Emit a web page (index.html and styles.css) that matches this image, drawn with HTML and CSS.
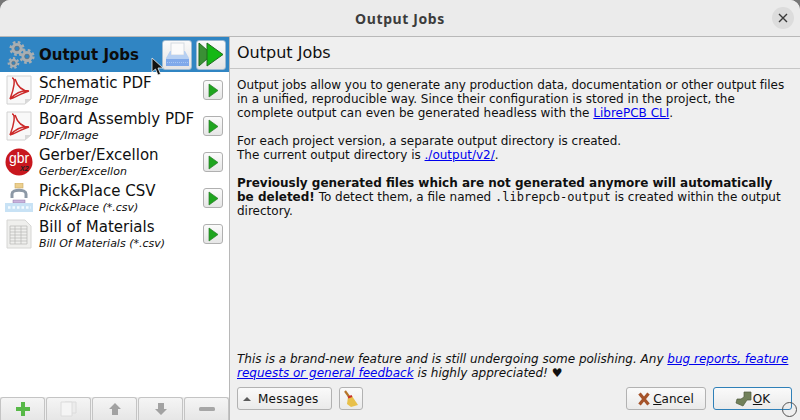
FILE: index.html
```html
<!DOCTYPE html>
<html lang="en">
<head>
    <meta charset="UTF-8">
    <title>Output Jobs</title>
    <link rel="stylesheet" href="styles.css">
</head>
<body>
<div class="window">
    <div class="titlebar">
        <span class="title">Output Jobs</span>
        <span class="close">
            <svg width="10" height="10" viewBox="0 0 10 10"><path d="M1 1 9 9M9 1 1 9" stroke="#3a3a3a" stroke-width="1.4"/></svg>
        </span>
    </div>
    <div class="main">
        <div class="side">
            <div class="side-head">
                <svg class="gears" width="30" height="30" viewBox="0 0 30 30">
                    <g fill="none" stroke="#a9aeb1">
                        <circle cx="12" cy="8.500" r="6.300" stroke-width="2.600" stroke-dasharray="2.600 2.350"/>
                        <circle cx="22" cy="16.500" r="6.300" stroke-width="2.600" stroke-dasharray="2.600 2.350"/>
                        <circle cx="8.500" cy="23" r="4.800" stroke-width="2.200" stroke-dasharray="2.200 2.100"/>
                        <circle cx="12" cy="8.500" r="4" stroke-width="3.200"/>
                        <circle cx="22" cy="16.500" r="4" stroke-width="3.200"/>
                        <circle cx="8.500" cy="23" r="3" stroke-width="2.400"/>
                    </g>
                    <g fill="none" stroke="#6d7478" stroke-width=".8">
                        <circle cx="12" cy="8.500" r="2.300"/>
                        <circle cx="22" cy="16.500" r="2.300"/>
                        <circle cx="8.500" cy="23" r="1.700"/>
                    </g>
                </svg>
                <span class="side-head-name">Output Jobs</span>
                <button class="head-btn">
                    <svg width="27" height="26" viewBox="0 0 27 26">
                        <rect x="7" y="1" width="13" height="12" fill="#fbfbfb" stroke="#d5dbe2"/>
                        <path d="M6 9H7V13H20V9H21L25 16V24H2V16Z" fill="#b7d0f2"/>
                        <rect x="2" y="17" width="23" height="7" fill="#7fa9ea"/>
                        <path d="M3 20.500H24" stroke="#a9c6f2" stroke-dasharray="1 1"/>
                    </svg>
                </button>
                <button class="head-btn">
                    <svg width="26" height="25" viewBox="0 0 26 25">
                        <path d="M1 1 14 12.500 1 24Z" fill="#3a8f35" stroke="#1f6b1f"/>
                        <path d="M9 1 25 12.500 9 24Z" fill="#14b814" stroke="#1f6b1f"/>
                    </svg>
                </button>
            </div>
            <div class="job-list">
                <div class="job">
                    <svg class="job-icon" width="26" height="30" viewBox="0 0 26 30">
                        <path d="M1 1H25V24L19 29H1Z" fill="#f8f8f8" stroke="#d2d2d2"/>
                        <path d="M19 29 19 24H25Z" fill="#d8d8d8"/>
                        <path d="M6 3C10 3 8 14 4 24 9 19 16 15 23 16 15 16 11 10 9 4M4 24C8 23 16 18 23 16" fill="none" stroke="#cc2a2a" stroke-width="1.500"/>
                    </svg>
                    <div class="job-text">
                        <div class="job-name">Schematic PDF</div>
                        <div class="job-type">PDF/Image</div>
                    </div>
                    <button class="run-btn"><svg width="12" height="15" viewBox="0 0 12 15"><path d="M2 1 11 7.500 2 14Z" fill="#1fa51f" stroke="#2b7a2b" stroke-width=".7"/></svg></button>
                </div>
                <div class="job">
                    <svg class="job-icon" width="26" height="30" viewBox="0 0 26 30">
                        <path d="M1 1H25V24L19 29H1Z" fill="#f8f8f8" stroke="#d2d2d2"/>
                        <path d="M19 29 19 24H25Z" fill="#d8d8d8"/>
                        <path d="M6 3C10 3 8 14 4 24 9 19 16 15 23 16 15 16 11 10 9 4M4 24C8 23 16 18 23 16" fill="none" stroke="#cc2a2a" stroke-width="1.500"/>
                    </svg>
                    <div class="job-text">
                        <div class="job-name">Board Assembly PDF</div>
                        <div class="job-type">PDF/Image</div>
                    </div>
                    <button class="run-btn"><svg width="12" height="15" viewBox="0 0 12 15"><path d="M2 1 11 7.500 2 14Z" fill="#1fa51f" stroke="#2b7a2b" stroke-width=".7"/></svg></button>
                </div>
                <div class="job">
                    <svg class="job-icon" width="28" height="28" viewBox="0 0 28 28">
                        <circle cx="14" cy="14" r="13.500" fill="#c8171e"/>
                        <text x="14" y="15" class="gbr-text">gbr</text>
                        <text x="15" y="23" class="gbr-sub">X2</text>
                    </svg>
                    <div class="job-text">
                        <div class="job-name">Gerber/Excellon</div>
                        <div class="job-type">Gerber/Excellon</div>
                    </div>
                    <button class="run-btn"><svg width="12" height="15" viewBox="0 0 12 15"><path d="M2 1 11 7.500 2 14Z" fill="#1fa51f" stroke="#2b7a2b" stroke-width=".7"/></svg></button>
                </div>
                <div class="job">
                    <svg class="job-icon" width="30" height="30" viewBox="0 0 30 30">
                        <rect x="11" y="0" width="8" height="5" fill="#eccf8e" stroke="#c8a862" stroke-width=".6"/>
                        <path d="M8 15V11C8 6 22 6 22 11V15" fill="none" stroke="#8d99a6" stroke-width="3"/>
                        <rect x="9" y="17" width="12" height="3" fill="#c9b3dc" stroke="#8f7aa8" stroke-width=".5"/>
                        <rect x="1" y="20" width="28" height="9" fill="#c8e2f5"/>
                        <path d="M4 24.500H27" stroke="#f4fbff" stroke-width="2.500" stroke-dasharray="2.500 2"/>
                    </svg>
                    <div class="job-text">
                        <div class="job-name">Pick&amp;Place CSV</div>
                        <div class="job-type">Pick&amp;Place (*.csv)</div>
                    </div>
                    <button class="run-btn"><svg width="12" height="15" viewBox="0 0 12 15"><path d="M2 1 11 7.500 2 14Z" fill="#1fa51f" stroke="#2b7a2b" stroke-width=".7"/></svg></button>
                </div>
                <div class="job">
                    <svg class="job-icon" width="26" height="30" viewBox="0 0 26 30">
                        <path d="M1 1H19L25 7V29H1Z" fill="#efefed" stroke="#d6d6d4"/>
                        <path d="M4 7H21M4 10H21M4 13H21M4 16H21M4 19H21M4 22H21M4 25H21M9 7V25M15 7V25M21 7V25M4 7V25" stroke="#b8b8b6" stroke-width=".7" fill="none"/>
                    </svg>
                    <div class="job-text">
                        <div class="job-name">Bill of Materials</div>
                        <div class="job-type">Bill Of Materials (*.csv)</div>
                    </div>
                    <button class="run-btn"><svg width="12" height="15" viewBox="0 0 12 15"><path d="M2 1 11 7.500 2 14Z" fill="#1fa51f" stroke="#2b7a2b" stroke-width=".7"/></svg></button>
                </div>
            </div>
            <div class="side-tools">
                <button class="tool-btn">
                    <svg width="16" height="14" viewBox="0 0 16 14"><path d="M6 0H10V5H15V9H10V14H6V9H1V5H6Z" fill="#58b948"/></svg>
                </button>
                <button class="tool-btn">
                    <svg width="18" height="16" viewBox="0 0 18 16"><path d="M5 1H16V12H5Z" fill="#ececec" stroke="#dcdcdc"/><path d="M1 1H12V15H1Z" fill="#f5f5f5" stroke="#dcdcdc"/></svg>
                </button>
                <button class="tool-btn">
                    <svg width="14" height="14" viewBox="0 0 14 14"><path d="M7 1 13 7H10V13H4V7H1Z" fill="#a2a2a2"/></svg>
                </button>
                <button class="tool-btn">
                    <svg width="14" height="14" viewBox="0 0 14 14"><path d="M7 13 13 7H10V1H4V7H1Z" fill="#a2a2a2"/></svg>
                </button>
                <button class="tool-btn">
                    <svg width="16" height="6" viewBox="0 0 16 6"><rect y="1" width="16" height="4" rx="1.500" fill="#a6a6a6"/></svg>
                </button>
            </div>
        </div>
        <div class="content">
            <div class="content-head">Output Jobs</div>
            <div class="content-body">
                <p><span class="tight">Output jobs allow you to generate any production data, documentation or other output files</span> in a unified, reproducible way. Since their configuration is stored in the project, the complete output can even be generated headless with the <a href="#">LibrePCB CLI</a>.</p>
                <p>For each project version, a separate output directory is created.<br>The current output directory is <a href="#">./output/v2/</a>.</p>
                <p><b>Previously generated files which are not generated anymore will automatically be deleted!</b> To detect them, a file named <code>.librepcb-output</code> is created within the output directory.</p>
            </div>
            <p class="note">This is a brand-new feature and is still undergoing some polishing. Any <a href="#">bug reports, feature requests or general feedback</a> is highly appreciated! ♥</p>
            <div class="actions">
                <button class="btn msg-btn"><span class="caret"></span>Messages</button>
                <button class="btn broom-btn">
                    <svg width="16" height="18" viewBox="0 0 16 18">
                        <path d="M2 1 7 8" stroke="#b5762b" stroke-width="2.200"/>
                        <path d="M5 7 9 6 15 15 8 17 4 14Z" fill="#e8c04a"/>
                        <path d="M5 7.500 9 6" stroke="#c8322a" stroke-width="2"/>
                    </svg>
                </button>
                <span class="spacer"></span>
                <button class="btn cancel-btn">
                    <svg width="12" height="14" viewBox="0 0 12 14"><path d="M1.500 1.500 10.500 12.500M10.500 1.500 1.500 12.500" stroke="#a5532a" stroke-width="3.200"/></svg>
                    <span><u>C</u>ancel</span>
                </button>
                <button class="btn ok-btn">
                    <svg width="17" height="16" viewBox="0 0 17 16"><path d="M9 1H16V9H12L8 15 1 12 2 8 6 8 9 6Z" fill="#71805a" stroke="#4f5a3d" stroke-width=".7"/></svg>
                    <span><u>O</u>K</span>
                </button>
            </div>
        </div>
    </div>
    <svg class="pointer" width="14" height="20" viewBox="0 0 14 20"><path d="M1 1V15L4.500 12 7 18 9.500 17 7 11H12Z" fill="#111" stroke="#eee" stroke-width=".8"/></svg>
    <span class="resize-ring"></span>
</div>
</body>
</html>
```

FILE: styles.css
```css
body {
    margin: 0;
    width: 800px;
    height: 420px;
    overflow: hidden;
    background: #777;
    font-family: "DejaVu Sans", sans-serif;
    font-size: 12px;
    color: #101010;
}
button {
    font-family: inherit;
    padding: 0;
    cursor: pointer;
}
.window {
    position: relative;
    width: 800px;
    height: 420px;
    display: flex;
    flex-direction: column;
    background: #efefef;
    border-radius: 10px 10px 0 0;
    overflow: hidden;
}
.titlebar {
    height: 36px;
    flex: none;
    display: flex;
    align-items: center;
    justify-content: center;
    position: relative;
    background: #ebebeb;
    border-bottom: 1px solid #b8b8b8;
}
.title {
    font-family: "Noto Sans", sans-serif;
    font-weight: 700;
    font-size: 14px;
    letter-spacing: 0.6px;
    color: #3c3c3c;
}
.close {
    position: absolute;
    right: 6px;
    top: 7px;
    width: 22px;
    height: 22px;
    border-radius: 50%;
    background: #dcdcdc;
    display: flex;
    align-items: center;
    justify-content: center;
}
.main {
    flex: 1;
    display: flex;
    min-height: 0;
}

/* left column */
.side {
    width: 229px;
    flex: none;
    display: flex;
    flex-direction: column;
    background: #fff;
    border-right: 1px solid #b8b8b8;
}
.side-head {
    height: 35px;
    flex: none;
    display: flex;
    align-items: center;
    gap: 4px;
    padding: 0 3px 0 5px;
    background: #3085c3;
}
.side-head-name {
    flex: 1;
    font-weight: 700;
    font-size: 15px;
    color: #0c0c0c;
}
.head-btn {
    width: 30px;
    height: 30px;
    display: flex;
    align-items: center;
    justify-content: center;
    background: linear-gradient(#fafafa, #e4e4e4);
    border: 1px solid #9dbad2;
    border-radius: 3px;
}
.job-list {
    flex: 1;
    background: #fff;
}
.job {
    height: 36px;
    display: flex;
    align-items: center;
    padding: 0 6px 0 4px;
}
.job-icon {
    flex: none;
    width: 30px;
}
.job-text {
    flex: 1;
    margin-left: 5px;
    padding-top: 2px;
    min-width: 0;
}
.job-name {
    font-size: 15px;
    line-height: 17px;
    white-space: nowrap;
}
.job-type {
    font-size: 11px;
    font-style: italic;
    line-height: 16px;
    white-space: nowrap;
}
.run-btn {
    width: 20px;
    height: 20px;
    flex: none;
    display: flex;
    align-items: center;
    justify-content: center;
    background: linear-gradient(#fbfbfb, #e6e6e6);
    border: 1px solid #b0b0b0;
    border-radius: 3px;
}
.side-tools {
    height: 23px;
    flex: none;
    display: flex;
    gap: 1px;
    background: #efefef;
}
.tool-btn {
    flex: 1;
    display: flex;
    align-items: center;
    justify-content: center;
    background: linear-gradient(#f5f5f5, #e6e6e6);
    border: 1px solid #c4c4c4;
    border-bottom: none;
    border-radius: 3px 3px 0 0;
}

/* right column */
.content {
    flex: 1;
    min-width: 0;
    display: flex;
    flex-direction: column;
    padding: 0 8px 10px 7px;
}
.content-head {
    height: 31px;
    flex: none;
    display: flex;
    align-items: center;
    font-size: 16px;
    border-bottom: 1px solid #c6c6c6;
    margin: 0 -8px 0 -7px;
    padding-left: 7px;
}
.content-body {
    flex: 1;
    padding-top: 9px;
}
.content-body p,
.note {
    margin: 0 0 14px;
    line-height: 14px;
    font-size: 12px;
}
.note {
    font-style: italic;
    margin: 0 0 7px;
}
/* the first line runs a bit narrower in the capture */
.tight {
    letter-spacing: -0.055px;
}
a {
    color: #0000ee;
}
code {
    font-family: "DejaVu Sans Mono", monospace;
    font-size: 12px;
}
.actions {
    display: flex;
    align-items: center;
    gap: 7px;
    height: 23px;
}
.spacer {
    flex: 1;
}
.btn {
    height: 23px;
    display: flex;
    align-items: center;
    justify-content: center;
    gap: 3px;
    font-size: 12px;
    color: #111;
    background: linear-gradient(#fafafa, #eaeaea);
    border: 1px solid #b2b2b2;
    border-radius: 3px;
}
.msg-btn {
    width: 95px;
    justify-content: flex-start;
    padding-left: 5px;
    gap: 7px;
    letter-spacing: 0.2px;
}
.caret {
    width: 0;
    height: 0;
    border-left: 4px solid transparent;
    border-right: 4px solid transparent;
    border-bottom: 4px solid #5a5a5a;
}
.broom-btn {
    width: 24px;
}
.cancel-btn {
    width: 80px;
}
.ok-btn {
    width: 79px;
    gap: 1px;
    border-color: #2f80b8;
}

/* overlays: mouse pointer and resize ring from the capture */
.pointer {
    position: absolute;
    left: 151px;
    top: 57px;
}
.resize-ring {
    position: absolute;
    left: 782px;
    top: 402px;
    width: 13px;
    height: 13px;
    border: 1px solid #555;
    border-radius: 50%;
}
.gbr-text {
    font-family: "Liberation Sans", sans-serif;
    font-size: 14px;
    fill: #fff;
    text-anchor: middle;
}
.gbr-sub {
    font-family: "Liberation Sans", sans-serif;
    font-size: 7px;
    font-style: italic;
    font-weight: 700;
    fill: #222;
}
```
